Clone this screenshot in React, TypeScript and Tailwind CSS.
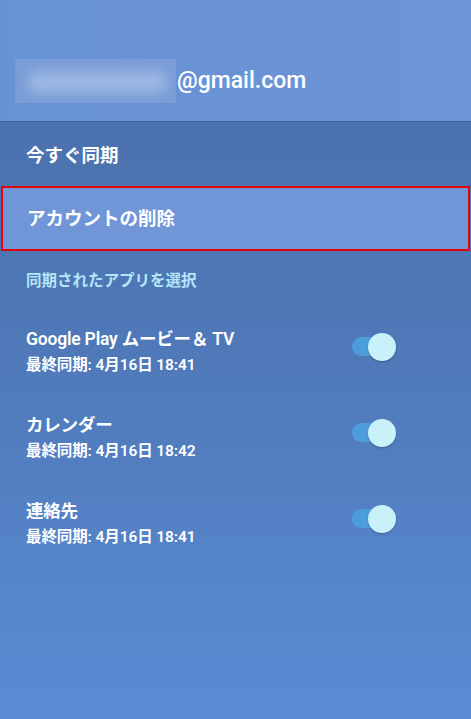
import React from 'react';

const apps = [
  { name: 'Google Play ムービー＆ TV', synced: '最終同期: 4月16日 18:41' },
  { name: 'カレンダー', synced: '最終同期: 4月16日 18:42' },
  { name: '連絡先', synced: '最終同期: 4月16日 18:41' },
];

const Toggle = () => (
  <div className="relative w-[44px] h-[28px]">
    <div className="absolute left-0 top-[4px] w-[30px] h-[19px] rounded-full bg-[#4d9ddd]" />
    <div className="absolute left-[16px] top-0 w-[28px] h-[28px] rounded-full bg-[#c9f1fa] shadow-[0_1px_2px_rgba(0,0,0,0.25)]" />
  </div>
);

export default function App() {
  return (
    <div
      className="w-[471px] h-[719px] overflow-hidden text-white bg-gradient-to-b from-[#4a6ea9] via-[#4f79b9] to-[#5a8cd4]"
      style={{ fontFamily: 'Roboto, "Noto Sans CJK JP", sans-serif' }}
    >
      {/* Account header */}
      <div className="h-[122px] bg-gradient-to-r from-[#6892d6] to-[#6c94d6] flex items-end pb-[18px] border-b border-[#3f629a]">
        <div className="flex items-center pl-[15px]">
          <div className="w-[161px] h-[44px] bg-[#7a9dd8] relative overflow-hidden">
            <div className="absolute left-[12px] right-[8px] top-[12px] bottom-[10px] rounded-full bg-[#9bb7e3] blur-[6px]" />
          </div>
          <span className="text-[23px] font-medium ml-[1px]">@gmail.com</span>
        </div>
      </div>

      {/* Sync now */}
      <div className="h-[64px] flex items-center pt-[5px] px-[26px]">
        <span className="text-[18.5px] font-semibold">今すぐ同期</span>
      </div>

      {/* Remove account (focused) */}
      <div className="mx-[1px] h-[65px] border-2 border-[#e8000b] bg-[#7096d7] flex items-center pt-[3px] px-[24px]">
        <span className="text-[18.5px] font-semibold">アカウントの削除</span>
      </div>

      {/* Section label */}
      <div className="h-[56px] flex items-center pt-[5px] px-[26px]">
        <span className="text-[15.5px] font-semibold text-[#b5e6f8]">同期されたアプリを選択</span>
      </div>

      {/* App list */}
      <div className="flex flex-col">
        {apps.map((app) => (
          <div key={app.name} className="h-[86px] flex items-start pt-[19px] pl-[26px] pr-[75px]">
            <div className="flex-1 flex flex-col">
              <span className="text-[17.5px] font-semibold leading-[26px] tracking-[-0.2px]">{app.name}</span>
              <span className="text-[15.5px] font-semibold leading-[26px] tracking-[-0.1px]">{app.synced}</span>
            </div>
            <div className="pt-[7px]">
              <Toggle />
            </div>
          </div>
        ))}
      </div>
    </div>
  );
}
